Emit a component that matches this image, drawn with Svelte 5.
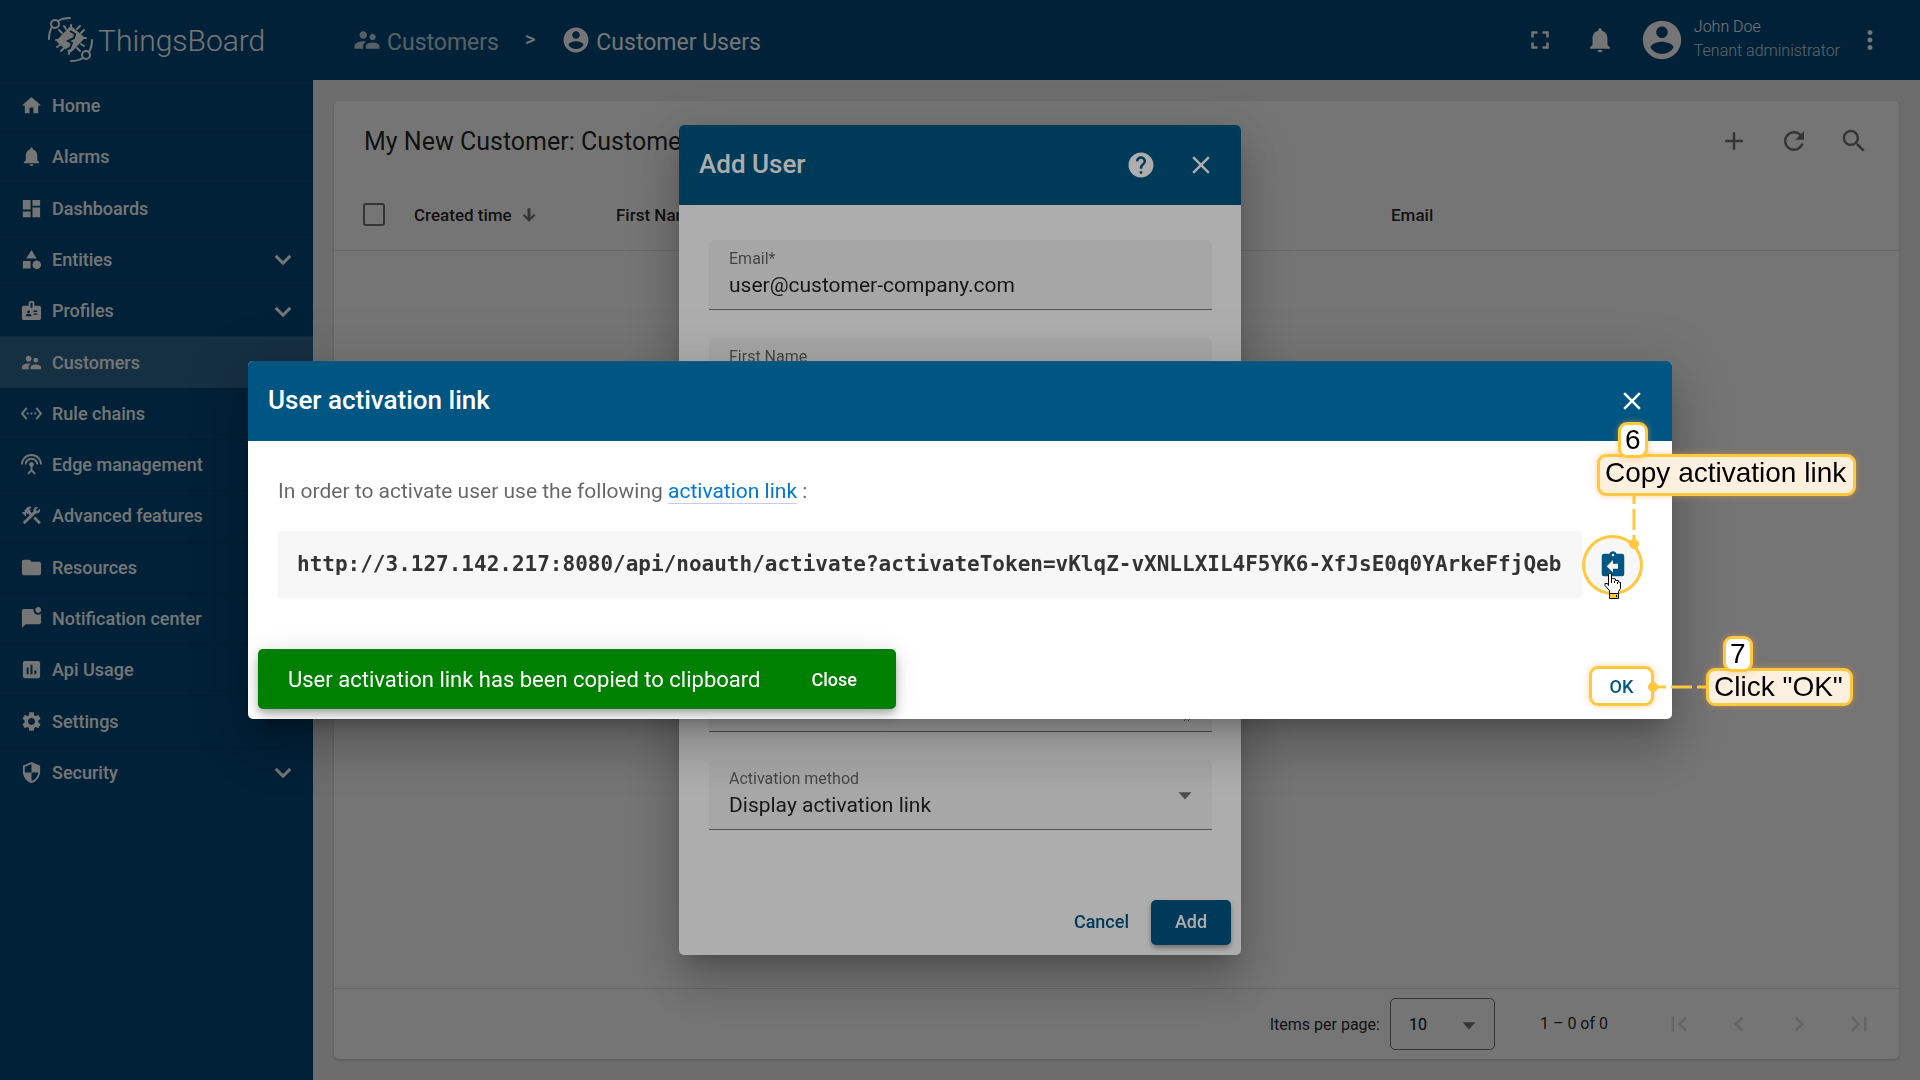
<script lang="ts">
    let email = "user@customer-company.com";
    let firstName = "";
    let lastName = "";
    let phone = "";
    let description = "";
    let activationMethod = "display";
    let pageSize = 10;

    let activationLink =
        "http://3.127.142.217:8080/api/noauth/activate?activateToken=vKlqZ-vXNLLXIL4F5YK6-XfJsE0q0YArkeFfjQeb";

    let menu = [
        { label: "Home", icon: "home" },
        { label: "Alarms", icon: "bell" },
        { label: "Dashboards", icon: "dashboard" },
        { label: "Entities", icon: "category", expandable: true },
        { label: "Profiles", icon: "badge", expandable: true },
        { label: "Customers", icon: "customers", active: true },
        { label: "Rule chains", icon: "chain" },
        { label: "Edge management", icon: "antenna" },
        { label: "Advanced features", icon: "construction" },
        { label: "Resources", icon: "folder" },
        { label: "Notification center", icon: "chat" },
        { label: "Api Usage", icon: "chart" },
        { label: "Settings", icon: "settings" },
        { label: "Security", icon: "security", expandable: true },
    ];

    let pageButtons = [
        { label: "First page", icon: "firstPage" },
        { label: "Previous page", icon: "previousPage" },
        { label: "Next page", icon: "nextPage" },
        { label: "Last page", icon: "lastPage" },
    ];

    let icons: Record<string, string> = {
        home: "M10 20v-6h4v6h5v-8h3L12 3 2 12h3v8z",
        bell: "M12 22c1.1 0 2-.9 2-2h-4c0 1.1.89 2 2 2zm6-6v-5c0-3.07-1.64-5.64-4.5-6.32V4c0-.83-.67-1.5-1.5-1.5s-1.5.67-1.5 1.5v.68C7.63 5.36 6 7.92 6 11v5l-2 2v1h16v-1l-2-2z",
        dashboard: "M3 13h8V3H3v10zm0 8h8v-6H3v6zm10 0h8V11h-8v10zm0-18v6h8V3h-8z",
        category: "M12 2l-5.5 9h11zM17.5 13a4.5 4.5 0 1 0 0 9 4.5 4.5 0 1 0 0-9zM3 13.5h8v8H3z",
        badge: "M20 7h-5V4c0-1.1-.9-2-2-2h-2c-1.1 0-2 .9-2 2v3H4c-1.1 0-2 .9-2 2v11c0 1.1.9 2 2 2h16c1.1 0 2-.9 2-2V9c0-1.1-.9-2-2-2zM9 12c.83 0 1.5.67 1.5 1.5S9.83 15 9 15s-1.5-.67-1.5-1.5S8.17 12 9 12zm3 6H6v-.75c0-1 2-1.5 3-1.5s3 .5 3 1.5V18zm1-9h-2V4h2v5zm5 7.5h-4V15h4v1.5zm0-3h-4V12h4v1.5z",
        customers: "M16.5 12c1.38 0 2.49-1.12 2.49-2.5S17.88 7 16.5 7C15.12 7 14 8.12 14 9.5s1.12 2.5 2.5 2.5zM9 11c1.66 0 2.99-1.34 2.99-3S10.66 5 9 5C7.34 5 6 6.34 6 8s1.34 3 3 3zm7.5 3c-1.83 0-5.5.92-5.5 2.75V19h11v-2.25c0-1.83-3.67-2.75-5.5-2.75zM9 13c-2.33 0-7 1.17-7 3.5V19h7v-2.25c0-.85.33-2.34 2.37-3.47C10.5 13.1 9.66 13 9 13z",
        chain: "M7.77 6.76L6.23 5.48.82 12l5.41 6.52 1.54-1.28L3.42 12l4.35-5.24zM7 13h2v-2H7v2zm10-2h-2v2h2v-2zm-6 2h2v-2h-2v2zm6.77-7.52l-1.54 1.28L20.58 12l-4.35 5.24 1.54 1.28L23.18 12l-5.41-6.52z",
        antenna: "M12 5c-3.87 0-7 3.13-7 7h2c0-2.76 2.24-5 5-5s5 2.24 5 5h2c0-3.87-3.13-7-7-7zm1 9.29c.88-.39 1.5-1.26 1.5-2.29 0-1.38-1.12-2.5-2.5-2.5S9.5 10.62 9.5 12c0 1.02.62 1.9 1.5 2.29v3.3L7.59 21 9 22.41l3-3 3 3L16.41 21 13 17.59v-3.3zM12 1C5.93 1 1 5.93 1 12h2c0-4.97 4.03-9 9-9s9 4.03 9 9h2c0-6.07-4.93-11-11-11z",
        construction: "M13.783 15.172l2.121-2.121 5.996 5.996-2.121 2.121zM17.5 10c1.93 0 3.5-1.57 3.5-3.5 0-.58-.16-1.12-.41-1.6l-2.7 2.7-1.49-1.49 2.7-2.7c-.48-.25-1.02-.41-1.6-.41C15.57 3 14 4.57 14 6.5c0 .41.08.8.21 1.16l-1.85 1.85-1.78-1.78.71-.71-1.41-1.41L12 3.49c-1.17-1.17-3.07-1.17-4.24 0L4.22 7.03l1.41 1.41H2.81l-.71.71 3.54 3.54.71-.71V9.15l1.41 1.41.71-.71 1.78 1.78-7.41 7.41 2.12 2.12L16.34 9.79c.36.13.75.21 1.16.21z",
        folder: "M10 4H4c-1.1 0-1.99.9-1.99 2L2 18c0 1.1.9 2 2 2h16c1.1 0 2-.9 2-2V8c0-1.1-.9-2-2-2h-8l-2-2z",
        chat: "M22 6.98V16c0 1.1-.9 2-2 2H6l-4 4V4c0-1.1.9-2 2-2h10.1c-.06.32-.1.66-.1 1 0 2.76 2.24 5 5 5 1.13 0 2.16-.39 3-1.02zM16 3c0 1.66 1.34 3 3 3s3-1.34 3-3-1.34-3-3-3-3 1.34-3 3z",
        chart: "M19 3H5c-1.1 0-2 .9-2 2v14c0 1.1.9 2 2 2h14c1.1 0 2-.9 2-2V5c0-1.1-.9-2-2-2zM9 17H7v-7h2v7zm4 0h-2V7h2v10zm4 0h-2v-4h2v4z",
        settings: "M19.14 12.94c.04-.3.06-.61.06-.94 0-.32-.02-.64-.07-.94l2.03-1.58c.18-.14.23-.41.12-.61l-1.92-3.32c-.12-.22-.37-.29-.59-.22l-2.39.96c-.5-.38-1.03-.7-1.62-.94l-.36-2.54c-.04-.24-.24-.41-.48-.41h-3.84c-.24 0-.43.17-.47.41l-.36 2.54c-.59.24-1.13.57-1.62.94l-2.39-.96c-.22-.08-.47 0-.59.22L2.74 8.87c-.12.21-.08.47.12.61l2.03 1.58c-.05.3-.09.63-.09.94s.02.64.07.94l-2.03 1.58c-.18.14-.23.41-.12.61l1.92 3.32c.12.22.37.29.59.22l2.39-.96c.5.38 1.03.7 1.62.94l.36 2.54c.05.24.24.41.48.41h3.84c.24 0 .44-.17.47-.41l.36-2.54c.59-.24 1.13-.56 1.62-.94l2.39.96c.22.08.47 0 .59-.22l1.92-3.32c.12-.22.07-.47-.12-.61l-2.01-1.58zM12 15.6c-1.98 0-3.6-1.62-3.6-3.6s1.62-3.6 3.6-3.6 3.6 1.62 3.6 3.6-1.62 3.6-3.6 3.6z",
        security: "M12 1L3 5v6c0 5.55 3.84 10.74 9 12 5.16-1.26 9-6.45 9-12V5l-9-4zm0 10.99h7c-.53 4.12-3.28 7.79-7 8.94V12H5V6.3l7-3.11v8.8z",
        expand: "M4.5 7L12 14.5 19.5 7 22 9.5l-10 10-10-10z",
        account: "M12 2C6.48 2 2 6.48 2 12s4.48 10 10 10 10-4.48 10-10S17.52 2 12 2zm0 3c1.66 0 3 1.34 3 3s-1.34 3-3 3-3-1.34-3-3 1.34-3 3-3zm0 14.2c-2.5 0-4.71-1.28-6-3.22.03-1.99 4-3.08 6-3.08 1.99 0 5.97 1.09 6 3.08-1.29 1.94-3.5 3.22-6 3.22z",
        fullscreen: "M7 14H5v5h5v-2H7v-3zm-2-4h2V7h3V5H5v5zm12 7h-3v2h5v-5h-2v3zM14 5v2h3v3h2V5h-5z",
        more: "M12 8c1.1 0 2-.9 2-2s-.9-2-2-2-2 .9-2 2 .9 2 2 2zm0 2c-1.1 0-2 .9-2 2s.9 2 2 2 2-.9 2-2-.9-2-2-2zm0 6c-1.1 0-2 .9-2 2s.9 2 2 2 2-.9 2-2-.9-2-2-2z",
        add: "M19 13h-6v6h-2v-6H5v-2h6V5h2v6h6v2z",
        refresh: "M17.65 6.35C16.2 4.9 14.21 4 12 4c-4.42 0-7.99 3.58-7.99 8s3.57 8 7.99 8c3.73 0 6.84-2.55 7.73-6h-2.08c-.82 2.33-3.04 4-5.65 4-3.31 0-6-2.69-6-6s2.69-6 6-6c1.66 0 3.14.69 4.22 1.78L13 11h7V4l-2.35 2.35z",
        search: "M15.5 14h-.79l-.28-.27C15.41 12.59 16 11.11 16 9.5 16 5.91 13.09 3 9.5 3S3 5.91 3 9.5 5.91 16 9.5 16c1.61 0 3.09-.59 4.23-1.57l.27.28v.79l5 4.99L20.49 19l-4.99-5zm-6 0C7.01 14 5 11.99 5 9.5S7.01 5 9.5 5 14 7.01 14 9.5 11.99 14 9.5 14z",
        sort: "M20.500 12.500l-2-2-4.500 4.500V3h-4v12l-4.500-4.500-2 2L12 21z",
        help: "M12 2C6.48 2 2 6.48 2 12s4.48 10 10 10 10-4.48 10-10S17.52 2 12 2zm1 17h-2v-2h2v2zm2.07-7.75l-.9.92C13.45 12.9 13 13.5 13 15h-2v-.5c0-1.1.45-2.1 1.17-2.83l1.24-1.26c.37-.36.59-.86.59-1.41 0-1.1-.9-2-2-2s-2 .9-2 2H8c0-2.21 1.79-4 4-4s4 1.79 4 4c0 .88-.36 1.68-.93 2.25z",
        close: "M19 6.41L17.59 5 12 10.59 6.41 5 5 6.41 10.59 12 5 17.59 6.41 19 12 13.41 17.59 19 19 17.59 13.41 12z",
        arrowDown: "M5 9l7 8 7-8z",
        copy: "M19 3h-4.18C14.4 1.84 13.3 1 12 1s-2.4.84-2.82 2H5a2 2 0 0 0-2 2v14a2 2 0 0 0 2 2h14a2 2 0 0 0 2-2V5a2 2 0 0 0-2-2zm-7 0a1 1 0 1 1 0 2 1 1 0 0 1 0-2zm4 12h-4v3l-5-5 5-5v3h4z",
        firstPage: "M18.41 16.59L13.82 12l4.59-4.59L17 6l-6 6 6 6zM6 6h2v12H6z",
        previousPage: "M15.41 7.41L14 6l-6 6 6 6 1.41-1.41L10.83 12z",
        nextPage: "M10 6L8.59 7.41 13.17 12l-4.58 4.59L10 18l6-6z",
        lastPage: "M5.59 7.41L10.18 12l-4.59 4.59L7 18l6-6-6-6zM16 6h2v12h-2z",
    };
</script>

{#snippet icon(name: string)}
    <svg class="icon {name}" viewBox="0 0 24 24" aria-hidden="true"><path d={icons[name]} /></svg>
{/snippet}

<div class="app">
    <aside class="sidebar">
        <a class="logo" href="#home">
            <svg class="logo-mark" viewBox="0 0 46 46" aria-hidden="true">
                <g fill="none" stroke="currentColor" stroke-width="2" stroke-linecap="round">
                    <circle cx="7" cy="7" r="4" />
                    <path d="M10 4Q15 1 22 1M4 10Q1 15 1 22" />
                    <circle cx="38" cy="38" r="4" />
                    <path d="M44 23q0 7-3 12M23 44q7 0 12-3" />
                    <path d="M18 12l-2-3M14 16l-3-3M23 11V8M29 12l3-3M33 16l3-3M35 21h3M33 27l3 2M29 31l3 3M21 34v3M16 31l-3 3M12 28l-3 2M11 23H8" />
                </g>
                <path fill="currentColor" d="M21 10.500q2-2 4 0L35 19q2 2 0 4L24 34.500q-2 2-4 0L10 26q-2-2 0-4z" />
                <path fill="none" stroke="#004b7b" stroke-width="2" d="M22 14l5 3-1 4-6 3 4 2-2 5-4 2" />
            </svg>
            <span>ThingsBoard</span>
        </a>
        <nav class="menu">
            {#each menu as item}
                <a class="menu-item" class:active={item.active} href="#{item.icon}">
                    {@render icon(item.icon)}
                    <span>{item.label}</span>
                    {#if item.expandable}
                        {@render icon("expand")}
                    {/if}
                </a>
            {/each}
        </nav>
    </aside>

    <div class="main">
        <header class="toolbar">
            <nav class="breadcrumb">
                <a class="crumb parent" href="#customers">{@render icon("customers")}<span>Customers</span></a>
                <span class="divider">&gt;</span>
                <a class="crumb" href="#users">{@render icon("account")}<span>Customer Users</span></a>
            </nav>
            <div class="toolbar-actions">
                <button class="icon-btn" aria-label="Fullscreen">{@render icon("fullscreen")}</button>
                <button class="icon-btn" aria-label="Notifications">{@render icon("bell")}</button>
                <div class="user">
                    {@render icon("account")}
                    <div class="user-info">
                        <span>John Doe</span>
                        <span class="authority">Tenant administrator</span>
                    </div>
                </div>
                <button class="icon-btn" aria-label="User menu">{@render icon("more")}</button>
            </div>
        </header>

        <main class="content">
            <section class="card">
                <div class="card-header">
                    <h1>My New Customer: Customer Users</h1>
                    <div class="card-actions">
                        <button class="icon-btn" aria-label="Add user">{@render icon("add")}</button>
                        <button class="icon-btn" aria-label="Refresh">{@render icon("refresh")}</button>
                        <button class="icon-btn" aria-label="Search">{@render icon("search")}</button>
                    </div>
                </div>
                <table class="users">
                    <thead>
                        <tr>
                            <th class="select-col"><input type="checkbox" aria-label="Select all" /></th>
                            <th class="time-col"><span class="sorted">Created time {@render icon("sort")}</span></th>
                            <th>First Name</th>
                            <th>Last Name</th>
                            <th class="email-col">Email</th>
                        </tr>
                    </thead>
                </table>
                <footer class="paginator">
                    <label for="page-size">Items per page:</label>
                    <div class="page-size">
                        <select id="page-size" bind:value={pageSize}>
                            <option value={10}>10</option>
                            <option value={20}>20</option>
                            <option value={30}>30</option>
                        </select>
                        {@render icon("arrowDown")}
                    </div>
                    <span class="range">1 – 0 of 0</span>
                    <div class="page-buttons">
                        {#each pageButtons as button}
                            <button class="icon-btn" disabled aria-label={button.label}>{@render icon(button.icon)}</button>
                        {/each}
                    </div>
                </footer>
            </section>
        </main>
    </div>
</div>

<div class="overlay">
    <form class="dialog add-user">
        <header class="dialog-header">
            <h2>Add User</h2>
            <button type="button" class="icon-btn" aria-label="Help">{@render icon("help")}</button>
            <button type="button" class="icon-btn" aria-label="Close">{@render icon("close")}</button>
        </header>
        <div class="fields">
            <div class="field">
                <label for="email">Email*</label>
                <input id="email" type="text" bind:value={email} />
            </div>
            <div class="field">
                <label for="first-name">First Name</label>
                <input id="first-name" type="text" bind:value={firstName} />
            </div>
            <div class="field">
                <label for="last-name">Last Name</label>
                <input id="last-name" type="text" bind:value={lastName} />
            </div>
            <div class="field">
                <label for="phone">Phone</label>
                <input id="phone" type="text" bind:value={phone} />
            </div>
            <div class="field">
                <label for="description">Description</label>
                <textarea id="description" bind:value={description}></textarea>
            </div>
            <div class="field">
                <label for="method">Activation method</label>
                <select id="method" bind:value={activationMethod}>
                    <option value="display">Display activation link</option>
                    <option value="mail">Send activation mail</option>
                </select>
                {@render icon("arrowDown")}
            </div>
        </div>
        <footer class="dialog-actions">
            <button type="button" class="btn">Cancel</button>
            <button type="button" class="btn raised">Add</button>
        </footer>
    </form>
</div>

<div class="overlay">
    <div class="dialog link-dialog">
        <header class="dialog-header">
            <h2>User activation link</h2>
            <button class="icon-btn" aria-label="Close">{@render icon("close")}</button>
        </header>
        <div class="link-content">
            <p>In order to activate user use the following <a href="#activate">activation link</a> :</p>
            <div class="link-row">
                <pre>{activationLink}</pre>
                <button class="copy-btn" aria-label="Copy activation link">{@render icon("copy")}</button>
            </div>
        </div>
        <footer class="link-actions">
            <div class="snackbar">
                <span>User activation link has been copied to clipboard</span>
                <button>Close</button>
            </div>
            <button class="ok-btn">OK</button>
        </footer>

        <div class="step copy-step">
            <span class="number">6</span>
            <span class="hint">Copy activation link</span>
        </div>
        <svg class="copy-connector" viewBox="0 0 12 56" aria-hidden="true">
            <path d="M6 0v10M6 15v21M6 41v8" />
            <circle cx="6" cy="50" r="5" />
        </svg>
        <svg class="ok-connector" viewBox="0 0 58 12" aria-hidden="true">
            <circle cx="5" cy="6" r="5" />
            <path d="M5 6h13M23 6h21M49 6h9" />
        </svg>
        <div class="step ok-step">
            <span class="number">7</span>
            <span class="hint">Click "OK"</span>
        </div>
        <svg class="cursor" viewBox="0 0 18 27" aria-hidden="true">
            <path fill="#fff" stroke="#000" d="M5.500 20.500V17.500L1 12.500V10.500H3.500L4.500 12.500V1.500L5.500 .5H6.500L7.500 1.500V6.500L8.500 5.500L11.500 6V7.500L14.500 7.500V9L16.500 9.500V15.500L14.500 18.500V20.500Z" />
            <path fill="none" stroke="#000" d="M7.500 6v4M10.500 8v2M13.500 9v2" />
            <path fill="#ffc83d" stroke="#000" d="M5.500 20.500h9v5h-9z" />
            <path d="M12 22h1v2h-1z" />
        </svg>
    </div>
</div>

<style>
    :global(body) {
        margin: 0;
        font-family: Roboto, "Liberation Sans", sans-serif;
    }

    .app {
        display: flex;
        height: 100vh;
        background: #eee;
    }

    .icon {
        width: 30px;
        height: 30px;
        flex: none;
        display: block;
        fill: currentColor;
    }

    button {
        font-family: inherit;
        border: none;
        background: none;
        padding: 0;
        color: inherit;
        cursor: pointer;
    }

    a {
        color: inherit;
        text-decoration: none;
    }

    .icon-btn {
        display: flex;
        align-items: center;
        justify-content: center;
        width: 60px;
        height: 60px;
        flex: none;
    }

    .sidebar {
        width: 313px;
        flex: none;
        background: #004b7b;
        color: #fff;
    }

    .logo {
        display: flex;
        align-items: center;
        gap: 4px;
        box-sizing: border-box;
        height: 80px;
        padding-left: 48px;
        font-size: 30px;
        font-weight: 300;
    }

    .logo-mark {
        width: 46px;
        height: 46px;
    }

    .menu {
        display: grid;
        grid-auto-rows: 1fr;
        height: 718px;
    }

    .menu-item {
        display: flex;
        align-items: center;
        gap: 9px;
        padding: 0 20px;
        box-shadow: inset 0 1px rgba(0, 0, 0, 0.12);
        font-size: 18px;
        font-weight: 500;
    }

    .menu-item.active {
        background: rgba(255, 255, 255, 0.18);
    }

    .menu-item span {
        flex: 1;
    }

    .menu-item .icon {
        width: 23px;
        height: 23px;
    }

    .menu-item .expand {
        width: 20px;
        height: 20px;
    }

    .main {
        flex: 1;
        min-width: 0;
        display: flex;
        flex-direction: column;
    }

    .toolbar {
        display: flex;
        align-items: center;
        justify-content: space-between;
        height: 80px;
        flex: none;
        padding: 0 20px 0 39px;
        background: #004b7b;
        color: #fff;
    }

    .breadcrumb,
    .crumb {
        display: flex;
        align-items: center;
    }

    .crumb {
        gap: 5px;
        font-size: 23px;
    }

    .crumb span {
        padding-top: 5px;
    }

    .parent {
        opacity: 0.75;
    }

    .divider {
        padding: 0 26px 2px;
        font-size: 20px;
        font-weight: 500;
    }

    .toolbar-actions {
        display: flex;
        align-items: center;
    }

    .user {
        display: flex;
        align-items: center;
        gap: 9px;
    }

    .user .icon {
        width: 46px;
        height: 46px;
        margin-left: 9px;
    }

    .user-info {
        display: flex;
        flex-direction: column;
        padding-bottom: 2px;
        font-size: 16px;
        font-weight: 300;
        line-height: 24px;
    }

    .authority {
        opacity: 0.8;
    }

    .content {
        flex: 1;
        min-height: 0;
        display: flex;
        padding: 21px;
    }

    .card {
        flex: 1;
        display: flex;
        flex-direction: column;
        background: #fff;
        border-radius: 5px;
        box-shadow: 0 1px 3px rgba(0, 0, 0, 0.2);
    }

    .card-header {
        display: flex;
        align-items: center;
        justify-content: space-between;
        height: 80px;
        padding: 0 15px 0 30px;
    }

    h1 {
        margin: 0;
        font-size: 25px;
        font-weight: 400;
        color: rgba(0, 0, 0, 0.87);
    }

    .card-actions {
        display: flex;
        color: rgba(0, 0, 0, 0.54);
    }

    .users {
        width: 100%;
        table-layout: fixed;
        border-collapse: collapse;
    }

    th {
        height: 67px;
        padding: 0 0 2px;
        border-bottom: 1px solid rgba(0, 0, 0, 0.12);
        text-align: left;
        font-size: 17px;
        font-weight: 500;
        color: rgba(0, 0, 0, 0.87);
    }

    .select-col {
        width: 80px;
    }

    .time-col {
        width: 202px;
    }

    .email-col {
        width: 508px;
    }

    input[type="checkbox"] {
        appearance: none;
        display: block;
        width: 22px;
        height: 23px;
        margin: 0 0 0 29px;
        border: 2px solid rgba(0, 0, 0, 0.54);
        border-radius: 3px;
    }

    .sorted {
        display: flex;
        align-items: center;
        gap: 8px;
    }

    .sort {
        width: 18px;
        height: 18px;
        color: rgba(0, 0, 0, 0.54);
    }

    .paginator {
        display: flex;
        align-items: center;
        justify-content: flex-end;
        height: 70px;
        margin-top: auto;
        padding-right: 10px;
        border-top: 1px solid rgba(0, 0, 0, 0.12);
        font-size: 16px;
        color: rgba(0, 0, 0, 0.87);
    }

    .page-size {
        position: relative;
        margin: 0 45px 0 10px;
    }

    .page-size select {
        appearance: none;
        width: 105px;
        height: 52px;
        padding: 0 18px;
        border: 1px solid rgba(0, 0, 0, 0.54);
        border-radius: 5px;
        background: none;
        font-family: inherit;
        font-size: 16px;
    }

    .range {
        padding-bottom: 2px;
    }

    .arrowDown {
        position: absolute;
        top: 16px;
        right: 15px;
        width: 22px;
        height: 22px;
        color: rgba(0, 0, 0, 0.54);
        pointer-events: none;
    }

    .page-buttons {
        display: flex;
        margin-left: 41px;
        color: rgba(0, 0, 0, 0.14);
    }

    .overlay {
        position: fixed;
        inset: 0;
        display: flex;
        align-items: center;
        justify-content: center;
        background: rgba(0, 0, 0, 0.32);
    }

    .dialog {
        position: relative;
        border-radius: 5px;
        background: #fff;
        box-shadow:
            0 14px 19px -9px rgba(0, 0, 0, 0.2),
            0 30px 48px 4px rgba(0, 0, 0, 0.14),
            0 11px 58px 10px rgba(0, 0, 0, 0.12);
    }

    .dialog-header {
        display: flex;
        align-items: center;
        height: 80px;
        padding: 0 10px 0 20px;
        border-radius: 5px 5px 0 0;
        background: #005683;
        color: #fff;
    }

    h2 {
        flex: 1;
        margin: 0;
        padding-bottom: 2px;
        font-size: 26px;
        font-weight: 500;
    }

    .add-user {
        width: 562px;
    }

    .fields {
        display: flex;
        flex-direction: column;
        gap: 28px;
        padding: 35px 29px 60px 30px;
    }

    .field {
        position: relative;
        display: flex;
        flex-direction: column;
        padding: 9px 20px 0;
        border-bottom: 1px solid rgba(0, 0, 0, 0.5);
        border-radius: 5px 5px 0 0;
        background: rgba(0, 0, 0, 0.04);
    }

    .field label {
        font-size: 16px;
        line-height: 20px;
        color: rgba(0, 0, 0, 0.6);
    }

    .field input,
    .field select,
    .field textarea {
        appearance: none;
        box-sizing: border-box;
        height: 40px;
        padding: 0 0 8px;
        border: none;
        background: none;
        font-family: inherit;
        font-size: 21px;
        color: rgba(0, 0, 0, 0.87);
    }

    .field textarea {
        height: 61px;
        margin-bottom: 9px;
    }

    .field .arrowDown {
        top: 24px;
        right: 16px;
    }

    .dialog-actions {
        display: flex;
        justify-content: flex-end;
        gap: 10px;
        padding: 10px;
    }

    .btn {
        height: 45px;
        padding: 0 12px 2px;
        font-size: 18px;
        font-weight: 500;
        color: #005683;
    }

    .raised {
        width: 80px;
        border-radius: 5px;
        background: #005683;
        color: #fff;
        box-shadow: 0 3px 5px rgba(0, 0, 0, 0.35);
    }

    .link-dialog {
        width: 1424px;
    }

    .link-content {
        padding: 35px 29px 51px 30px;
    }

    p {
        margin: 0 0 24px;
        font-size: 21px;
        line-height: 31px;
        color: rgba(0, 0, 0, 0.6);
    }

    p a {
        border-bottom: 1px solid rgba(64, 84, 178, 0.3);
        color: #0078d4;
    }

    .link-row {
        display: flex;
        align-items: center;
    }

    pre {
        flex: 1;
        margin: 0;
        padding: 20px 19px;
        background: #f7f7f7;
        font-family: "DejaVu Sans Mono", monospace;
        font-size: 21px;
        font-weight: 700;
        line-height: 27px;
        color: #333;
    }

    .copy-btn {
        display: flex;
        align-items: center;
        justify-content: center;
        box-sizing: border-box;
        width: 61px;
        height: 60px;
        border: 3px solid #ffc83d;
        border-radius: 50%;
        background: #f7f7f7;
        color: #005683;
    }

    .link-actions {
        display: flex;
        align-items: center;
        justify-content: space-between;
        padding: 0 18px 10px 10px;
    }

    .snackbar {
        display: flex;
        align-items: center;
        box-sizing: border-box;
        width: 638px;
        height: 60px;
        padding: 0 39px 0 30px;
        justify-content: space-between;
        border-radius: 5px;
        background: #008000;
        color: #fff;
        font-size: 22px;
        box-shadow:
            0 4px 6px -1px rgba(0, 0, 0, 0.2),
            0 8px 13px rgba(0, 0, 0, 0.14),
            0 1px 23px rgba(0, 0, 0, 0.12);
    }

    .snackbar button {
        font-size: 18px;
        font-weight: 500;
    }

    .ok-btn {
        width: 65px;
        height: 40px;
        margin-top: 14px;
        border: 3px solid #ffc83d;
        border-radius: 9px;
        box-shadow: 0 0 6px rgba(255, 160, 60, 0.5);
        font-size: 18px;
        font-weight: 500;
        color: #005683;
    }

    .step {
        position: absolute;
        display: flex;
        flex-direction: column;
        align-items: flex-start;
        font-family: "Liberation Sans", Arial, sans-serif;
        font-size: 28px;
        line-height: 32px;
        color: #000;
        white-space: nowrap;
    }

    .number,
    .hint {
        border: 3px solid #ffc83d;
        border-radius: 9px;
        box-shadow: 0 0 6px rgba(255, 160, 60, 0.5);
    }

    .number {
        z-index: 1;
        margin: 0 0 -4px 17px;
        padding: 0 4px;
        line-height: 30px;
        background: #fff;
    }

    .hint {
        padding: 0 7px 0 5px;
        background: #fdf0df;
    }

    .copy-step {
        top: 61px;
        left: 1349px;
    }

    .copy-step .hint {
        padding-bottom: 4px;
    }

    .copy-step .number {
        margin-left: 21px;
    }

    .ok-step {
        bottom: 13px;
        left: 1458px;
    }

    .copy-connector {
        position: absolute;
        top: 133px;
        left: 1380px;
        width: 12px;
        height: 56px;
    }

    .ok-connector {
        position: absolute;
        bottom: 26px;
        left: 1400px;
        width: 58px;
        height: 12px;
    }

    .copy-connector,
    .ok-connector {
        fill: #ffc83d;
    }

    .copy-connector path,
    .ok-connector path {
        stroke: #ffc83d;
        stroke-width: 3;
    }

    .cursor {
        position: absolute;
        top: 212px;
        left: 1356px;
        width: 18px;
        height: 27px;
    }
</style>
